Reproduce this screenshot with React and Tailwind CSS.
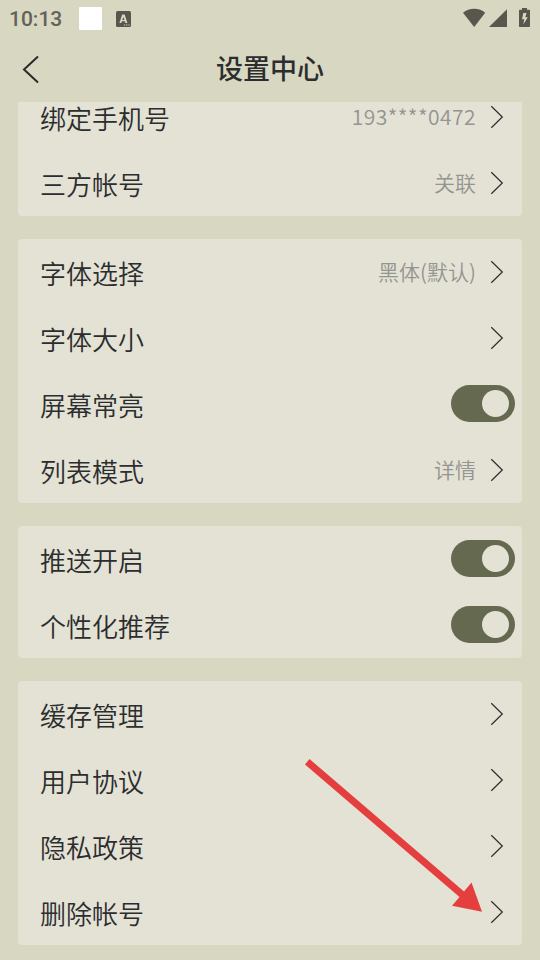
import React from 'react';

const groups = [
  [
    { label: '绑定手机号', value: '193****0472' },
    { label: '三方帐号', value: '关联' },
  ],
  [
    { label: '字体选择', value: '黑体(默认)' },
    { label: '字体大小' },
    { label: '屏幕常亮', toggle: true },
    { label: '列表模式', value: '详情' },
  ],
  [
    { label: '推送开启', toggle: true },
    { label: '个性化推荐', toggle: true },
  ],
  [
    { label: '缓存管理' },
    { label: '用户协议' },
    { label: '隐私政策' },
    { label: '删除帐号' },
  ],
];

const StatusBar = () => (
  <div className="flex h-9 shrink-0 items-center justify-between pl-[9px] pr-[9px] text-[#57574d]">
    <div className="flex items-center">
      <span className="w-[70px] pt-[2px] font-['Roboto',sans-serif] text-[21px] font-medium leading-9 text-[#626258]">
        10:13
      </span>
      <span className="mt-[1px] size-[23px] rounded-[1px] bg-white" />
      <svg className="ml-[14px] mt-[1px]" width="15" height="16" viewBox="0 0 15 16">
        <rect width="15" height="16" rx="1.5" fill="currentColor" />
        <path
          fill="#d9d8c2"
          fillRule="evenodd"
          d="M6.200 3.500h2.400L11.400 12H9.400L8.900 10.300H5.800L5.300 12H3.400zM7.400 5.900 6.300 8.900h2.100z"
        />
        <path d="M8 14h1.200M10.200 14h1.200M12.400 14h1.200" stroke="#d9d8c2" strokeWidth="1.2" />
      </svg>
    </div>
    <svg width="68" height="20" viewBox="0 0 68 20" fill="currentColor">
      <path d="M0 4.800C3 2.200 7 .8 11.200.8s8.200 1.400 11 4L11.200 19z" />
      <path d="M44 1.300V19H26z" />
      <path
        fillRule="evenodd"
        d="M59 0h5v1.800h2c.6 0 1 .4 1 1V18c0 .6-.4 1-1 1h-9c-.6 0-1-.4-1-1V2.800c0-.6.4-1 1-1h2zM60.300 5 59 11.200h2.300L60.300 16.500 64.800 9.300H62.300L63.500 5z"
      />
    </svg>
  </div>
);

const Header = () => (
  <header className="grid h-[66px] shrink-0 grid-cols-[80px_1fr_80px] items-center">
    <svg
      className="ml-[22px]"
      width="18"
      height="30"
      viewBox="0 0 18 30"
      fill="none"
      stroke="#282a2b"
      strokeWidth="2"
    >
      <path d="M16 2.500 2 15.500 16 28.500" />
    </svg>
    <h1 className="pb-[2px] text-center text-[27px] font-medium leading-[64px]">设置中心</h1>
  </header>
);

const Chevron = () => (
  <svg
    width="14"
    height="24"
    viewBox="0 0 14 24"
    fill="none"
    stroke="#2b2d2e"
    strokeWidth="1.2"
  >
    <path d="M1.300 1.200 12.300 12 1.300 22.800" />
  </svg>
);

const Toggle = () => (
  <span className="mb-px flex h-[37px] w-16 items-center justify-end rounded-full bg-[#656950] pr-[6px]">
    <span className="size-[27px] rounded-full bg-[#e4e2d5]" />
  </span>
);

const Row = ({ label, value, toggle }) => (
  <div
    className={`flex h-[66px] items-center justify-between pl-[22px] ${toggle ? 'pr-[7px]' : 'pr-[18px]'}`}
  >
    <span className="pt-px text-[26px] font-[350] leading-[38px]">{label}</span>
    {toggle ? (
      <Toggle />
    ) : (
      <div className="flex items-center gap-[14px]">
        <span
          className={`pb-[2px] text-[21px] font-[350] leading-[30px] text-[#949490] ${/^\d/.test(value) ? 'tracking-[0.45px]' : ''}`}
        >
          {value}
        </span>
        <Chevron />
      </div>
    )}
  </div>
);

const App = () => (
  <div className="relative flex h-[960px] w-[540px] flex-col overflow-hidden bg-[#d8d7c1] font-['Noto_Sans_CJK_SC',sans-serif] text-[#2b2d2e]">
    <StatusBar />
    <Header />
    <main className="min-h-0 flex-1 overflow-hidden px-[18px]">
      {/* list is scrolled a little, so the first row is cut by the header */}
      <div className="-mt-[18px] flex flex-col gap-[23px]">
        {groups.map((rows) => (
          <section key={rows[0].label} className="rounded-[4px] bg-[#e4e2d5]">
            {rows.map((row) => (
              <Row key={row.label} {...row} />
            ))}
          </section>
        ))}
      </div>
    </main>
    <svg
      className="pointer-events-none absolute left-[300px] top-[750px]"
      width="190"
      height="170"
      viewBox="0 0 190 170"
      fill="#e53e3e"
    >
      <path d="M9.500 9 164 141.500 171.500 132.500 182 161.800 152 155.800 159.500 147 5 14.500z" />
    </svg>
  </div>
);

export default App;
